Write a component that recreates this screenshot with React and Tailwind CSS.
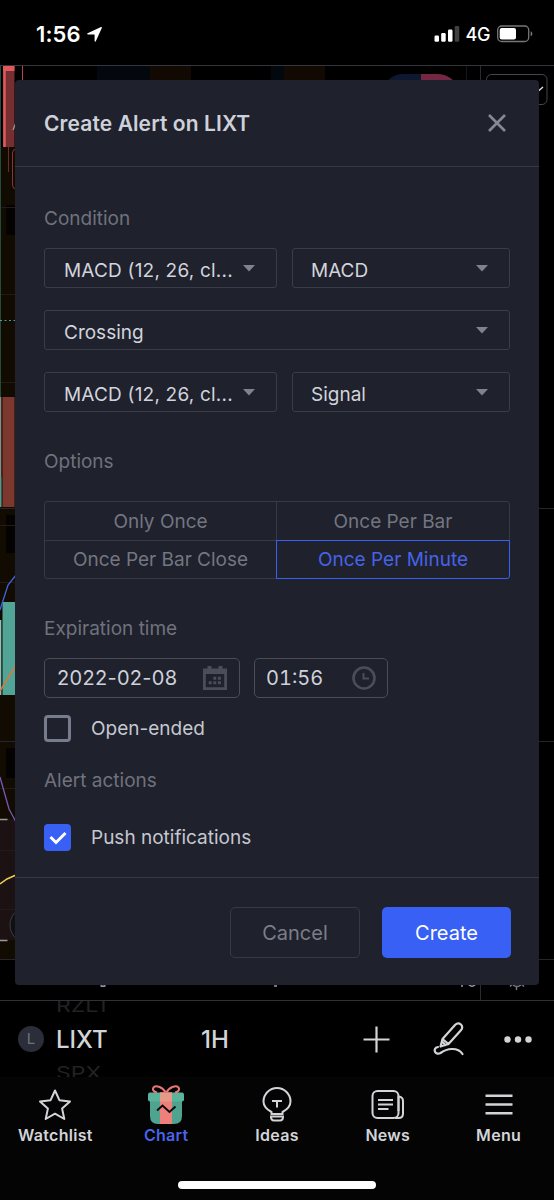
import { useState } from 'react';

const REPEAT_OPTIONS = ['Only Once', 'Once Per Bar', 'Once Per Bar Close', 'Once Per Minute'];

function StatusBar() {
  return (
    <header className="flex h-[65px] items-start justify-between pt-[22px] pr-[20px] pl-[36px] text-white">
      <div className="flex items-center">
        <span className="text-[22px] leading-[25px] font-semibold tracking-[0.1px]">1:56</span>
        <svg className="ml-[6px]" width="15" height="15" viewBox="0 0 15 15" fill="currentColor">
          <path d="M14 .1c.7-.3 1.100.2.8.9L8.800 14.300c-.3.7-1.200.6-1.200-.2V7.900c0-.3-.2-.5-.5-.5H.9C.1 7.400-.1 6.500.6 6.200Z" />
        </svg>
      </div>
      <div className="flex items-center">
        <svg width="26" height="25" viewBox="0 0 26 25" fill="currentColor">
          <rect x="0.500" y="13.500" width="4.500" height="6.300" rx="1.200" />
          <rect x="7.200" y="11" width="4.500" height="8.800" rx="1.200" />
          <rect x="14" y="7.500" width="4.500" height="12.300" rx="1.200" />
          <rect x="20.700" y="4" width="4.500" height="15.800" rx="1.200" opacity="0.250" />
        </svg>
        <span className="ml-[6px] text-[18px] leading-[25px] font-medium tracking-[-0.4px]">4G</span>
        <svg className="ml-[7px]" width="37" height="25" viewBox="0 0 37 25">
          <rect x="0.700" y="4" width="31" height="15.500" rx="4" fill="none" stroke="#777" strokeWidth="1.300" />
          <rect x="2.700" y="6" width="16.300" height="11.500" rx="2" fill="#fff" />
          <path d="M33.700 9.200c2.200.8 2.200 4.300 0 5.100z" fill="#777" />
        </svg>
      </div>
    </header>
  );
}

function ChartBackdrop() {
  return (
    <svg className="absolute inset-0" width="554" height="934" viewBox="0 66 554 934" fill="none">
      <rect x="0" y="147" width="40" height="812" fill="#110b02" />
      <rect x="6" y="205" width="20" height="30" fill="#050301" />
      <rect x="6" y="515" width="20" height="38" fill="#050301" />
      <rect x="6" y="748" width="20" height="30" fill="#050301" />
      <rect x="0" y="819" width="40" height="121" fill="#1c1213" />
      <path d="M0 207.500h40M0 294.500h40M0 382.500h40M0 525.500h40M0 582.500h40M0 788.500h40M0 850.500h40M0 909.500h40" stroke="#211c17" />
      <path d="M0 508.500h554M0 741.500h554M0 959.500h554" stroke="#25252b" />
      <path d="M0.500 66v331" stroke="#254a40" />

      <rect x="97" y="66" width="53" height="20" fill="#03080f" />
      <rect x="150" y="66" width="41" height="20" fill="#120a02" />
      <rect x="271" y="66" width="13" height="20" fill="#03080f" />
      <rect x="284" y="66" width="41" height="20" fill="#120a02" />
      <path d="M466.500 66v20" stroke="#15171c" />
      <path d="M480.500 66v935" stroke="#2a2b31" />
      <path d="M385 90c0-10 8-16 18-16h18v16z" fill="#0e1730" />
      <path d="M421 74h16c10 0 20 6 20 16h-36z" fill="#742743" />
      <rect x="486.500" y="74.500" width="60.500" height="30" rx="5" fill="#000" stroke="#44464d" />
      <path d="M535 86l4 4.500 4-3.500" stroke="#ddd" strokeWidth="1.500" />

      <rect x="3" y="66" width="11.500" height="81" fill="#752f30" />
      <path d="M4.500 66v81" stroke="#e0585a" strokeWidth="2.500" />
      <rect x="3" y="66" width="11.500" height="5" fill="#e0585a" />
      <path d="M22.500 66v20" stroke="#b9474c" />
      <path d="M8.500 147v25" stroke="#6b2a2b" />
      <path d="M13 130l4-10" stroke="#999" strokeWidth="1.300" />
      <rect x="12.500" y="149" width="20" height="40" rx="4" stroke="#8c3338" />

      <path d="M0 320.500h40" stroke="#4c9f96" strokeDasharray="2 2.500" />
      <rect x="0" y="397" width="1.300" height="110" fill="#8f8a86" />
      <rect x="2.500" y="397" width="12" height="110" fill="#7c382e" />
      <rect x="0" y="477" width="1.300" height="30" fill="#4f9d90" />
      <rect x="0" y="620" width="1.300" height="75" fill="#8bc4b8" />
      <rect x="2.500" y="602" width="20" height="93" fill="#51a496" />
      <path d="M0 610l8-25 8-10" stroke="#3f66e0" strokeWidth="1.300" />
      <path d="M0 691l16-26" stroke="#d5793d" strokeWidth="1.500" />
      <path d="M0 777l9 32 7 13" stroke="#7a58b8" strokeWidth="1.300" />
      <path d="M0 819.500h7.500M0 940.500h7.500" stroke="#9a9a9a" strokeWidth="1.300" />
      <path d="M0 884l7-5 9-4" stroke="#e6d44e" strokeWidth="1.500" />
      <circle cx="28" cy="925" r="18" fill="#101014" stroke="#3c3c40" />

      {/* what the dialog leaves of the time axis labels and the axis gear */}
      <path d="M100.500 985.500q2.500 1.500 5 0M274 986h3M461 986h2M469 985q3 2.500 6 0" stroke="#9a9ba0" strokeWidth="1.500" />
      <path d="M510 986.500l2-2M513 985q4 3 8 0M516.500 986v4M522 984.500l2 2" stroke="#77797f" strokeWidth="1.500" />
    </svg>
  );
}

function SelectBox({ value, className = 'pl-[19px]' }) {
  return (
    <button className={`flex h-10 items-center justify-between rounded-[3px] border-[1.500px] border-[#3a3d48] pr-[21px] text-[#d1d4dc] ${className}`}>
      <span className="pt-[6px] whitespace-nowrap">{value}</span>
      <svg width="12" height="7" viewBox="0 0 12 7" fill="#80838f">
        <path d="M0 0h12L6 6.500z" />
      </svg>
    </button>
  );
}

function Label({ children, className = '' }) {
  return <h3 className={`h-6 pt-px leading-6 text-[#6f727d] ${className}`}>{children}</h3>;
}

function CalendarIcon() {
  return (
    <svg width="24" height="24" viewBox="0 0 24 24" fill="#4b4e59">
      <path fillRule="evenodd" d="M0 2.500h4.500V0h4v2.500h7V0h4v2.500H24V24H0zM2.800 8v13.200h18.400V8z" />
      <path d="M10.300 10.700h3v3h-3zM14.900 10.700h3v3h-3zM5.700 15.200h3v3h-3zM10.300 15.200h3v3h-3zM14.900 15.200h3v3h-3z" />
    </svg>
  );
}

function ClockIcon() {
  return (
    <svg width="24" height="24" viewBox="0 0 24 24" fill="none" stroke="#4b4e59">
      <circle cx="12" cy="12" r="10.500" strokeWidth="2.600" />
      <path d="M11.500 7v5.500h5.500" strokeWidth="2" />
    </svg>
  );
}

function Checkbox({ checked, onChange, children, className = '' }) {
  return (
    <button className={`flex h-[27px] items-center ${className}`} onClick={onChange}>
      {checked ? (
        <span className="flex size-[27px] items-center justify-center rounded-[4px] bg-[#3860f4]">
          <svg width="18" height="14" viewBox="0 0 18 14" fill="none" stroke="#fff" strokeWidth="3">
            <path d="M1.500 6l5.500 5.500L16.500 2" />
          </svg>
        </span>
      ) : (
        <span className="size-[27px] rounded-[4px] border-3 border-[#747c8e]" />
      )}
      <span className="ml-5 pt-px text-[#c5c8d1]">{children}</span>
    </button>
  );
}

function AlertDialog() {
  const [repeat, setRepeat] = useState('Once Per Minute');
  const [openEnded, setOpenEnded] = useState(false);
  const [push, setPush] = useState(true);

  return (
    <section className="relative mx-[15px] mt-[14px] h-[905px] rounded-[4px] bg-[#1f212c] text-[19px]">
      <div className="flex h-[87px] items-center justify-between border-b border-[#363a45] pr-[33px] pl-[29px]">
        <h2 className="pt-px text-[21px] font-semibold tracking-[0.1px] text-[#ced1da]">Create Alert on LIXT</h2>
        <svg width="18" height="18" viewBox="0 0 18 18" stroke="#868993" strokeWidth="2.600">
          <path d="M1 1l16 16M17 1L1 17" />
        </svg>
      </div>

      <div className="h-[710px] px-[29px] pt-[39px]">
        <Label>Condition</Label>
        <div className="mt-[18px] flex flex-col gap-[22px]">
          <div className="flex gap-[15px]">
            <SelectBox value="MACD (12, 26, cl..." className="w-[233px] pl-[19px] tracking-[0.2px]" />
            <SelectBox value="MACD" className="flex-1 pl-[18px]" />
          </div>
          <SelectBox value="Crossing" />
          <div className="flex gap-[15px]">
            <SelectBox value="MACD (12, 26, cl..." className="w-[233px] pl-[19px] tracking-[0.2px]" />
            <SelectBox value="Signal" className="flex-1 pl-[18px]" />
          </div>
        </div>

        <Label className="mt-[37px]">Options</Label>
        <div className="mt-[28px] grid h-[78px] grid-cols-2">
          {REPEAT_OPTIONS.map((option) => (
            <button
              key={option}
              onClick={() => setRepeat(option)}
              className={`border pt-[2px] even:-ml-px nth-[n+3]:-mt-px first:rounded-tl-[3px] last:rounded-br-[3px] nth-2:rounded-tr-[3px] nth-3:rounded-bl-[3px] ${repeat === option ? 'z-10 border-[#3860f4] text-[#4663e8]' : 'border-[#363a45] text-[#737681]'}`}
            >
              {option}
            </button>
          ))}
        </div>

        <Label className="mt-[37px]">Expiration time</Label>
        <div className="mt-[18px] flex gap-[14px] text-[20px] text-[#ced1da]">
          <div className="flex h-10 w-[196px] items-center justify-between rounded-[5px] border-[1.500px] border-[#4a4d58] px-[12px]">
            <span className="tracking-[0.3px]">2022-02-08</span>
            <CalendarIcon />
          </div>
          <div className="flex h-10 w-[134px] items-center justify-between rounded-[5px] border-[1.500px] border-[#4a4d58] px-[11px]">
            <span className="tabular-nums">01:56</span>
            <ClockIcon />
          </div>
        </div>
        <Checkbox className="mt-[17px]" checked={openEnded} onChange={() => setOpenEnded(!openEnded)}>Open-ended</Checkbox>

        <Label className="mt-[26px]">Alert actions</Label>
        <Checkbox className="mt-[32px]" checked={push} onChange={() => setPush(!push)}>Push notifications</Checkbox>
      </div>

      <div className="flex h-[108px] justify-end gap-[22px] border-t border-[#363a45] pt-[29px] pr-[28px] text-[20px]">
        <button className="h-[51px] w-[130px] rounded-[5px] border-[1.500px] border-[#363a45] text-[#7b7e89]">Cancel</button>
        <button className="h-[51px] w-[129px] rounded-[5px] bg-[#3860f4] text-white">Create</button>
      </div>
    </section>
  );
}

function ChartToolbar() {
  return (
    <div className="flex h-[77px] items-center border-t border-[#303137] pl-[18px] text-[24px] font-medium text-[#d3d4d6]">
      <span className="flex size-[26px] items-center justify-center rounded-full bg-[#2b2d38] text-[15px] font-normal text-[#6f727d]">L</span>
      <div className="ml-[12px] flex h-[76px] w-[145px] flex-col justify-center overflow-hidden">
        <span className="origin-bottom scale-y-75 text-[23px] leading-[30px] font-normal text-[#222226]">RZLT</span>
        <span className="mt-[8px] mb-[7px] leading-[30px]">LIXT</span>
        <span className="origin-top scale-y-75 text-[23px] leading-[30px] font-normal text-[#222226]">SPX</span>
      </div>
      <span className="w-[162px] pt-[2px]">1H</span>
      <svg width="27" height="27" viewBox="0 0 27 27" stroke="currentColor" strokeWidth="2.200">
        <path d="M13.500 0.500v26M0.500 13.500h26" />
      </svg>
      <svg className="ml-[43px]" width="34" height="36" viewBox="0 0 34 36" fill="none" stroke="currentColor" strokeWidth="2.200" strokeLinejoin="round" strokeLinecap="round">
        <path d="M9.500 18L22 4c2-2 4.200-2 5.900-.5s1.800 3.800 0 5.800L15.500 23l-8 2.500zM9.500 18l6 5M9 20.500l3.500 3.500" />
        <path d="M5 26c-3.300.5-3.800 3-3 4.800s3.300 2.500 5.500 1.200c6-4.500 17-6.500 22 1" />
      </svg>
      <svg className="ml-[37px]" width="28" height="7" viewBox="0 0 28 7" fill="currentColor">
        <circle cx="3.500" cy="3.500" r="3.200" />
        <circle cx="14" cy="3.500" r="3.200" />
        <circle cx="24.500" cy="3.500" r="3.200" />
      </svg>
    </div>
  );
}

function StarIcon() {
  return (
    <svg width="36" height="40" viewBox="0 0 36 40" fill="none" stroke="currentColor" strokeWidth="2" strokeLinejoin="round">
      <path d="M18 5.500l4.400 9.700 10.600 1.200-7.900 7.200 2.200 10.400L18 28.700 8.700 34l2.200-10.400L3 16.400l10.600-1.200z" />
    </svg>
  );
}

function GiftIcon() {
  return (
    <svg width="36" height="40" viewBox="0 0 36 40" fill="none">
      <path d="M2 15h32v16q0 8-8 8H10q-8 0-8-8z" fill="#4fa38f" />
      <rect x="0" y="7.500" width="36" height="9" rx="2" fill="#5bb39c" />
      <rect x="12" y="7.500" width="12" height="31.500" fill="#ee7f7a" />
      <rect x="12" y="7.500" width="12" height="9" fill="#e39b88" />
      <path d="M17.500 7.500C15 2 8 .2 6 2S5 7 9 7.500M18.500 7.500C21 2 28 .2 30 2s1 5-3 5.500" stroke="#e87677" strokeWidth="2" />
      <path d="M9 25.500l5.500-5 7 6.500 6-5.500" stroke="#0b0d0d" strokeWidth="2" />
    </svg>
  );
}

function BulbIcon() {
  return (
    <svg width="36" height="40" viewBox="0 0 36 40" fill="none" stroke="currentColor" strokeWidth="2">
      <path d="M12.500 29v-2C7 24 4.500 20.500 4.500 16.500a13.500 13.500 0 0 1 27 0c0 4-2.500 7.500-8 10.500v2zM11 31.500h14M12 31.500q0 4 3 4h6q3 0 3-4M13 16h10M18 16v6.500" />
    </svg>
  );
}

function NewsIcon() {
  return (
    <svg width="36" height="40" viewBox="0 0 36 40" fill="none" stroke="currentColor" strokeWidth="2">
      <rect x="2.500" y="6" width="26" height="27" rx="5" />
      <path d="M25 33h3.500q4.500 0 4.500-4.500V16q0-4-4.500-4.500V26M8 15h15M8 19.500h15M8 24h10.500" />
    </svg>
  );
}

function MenuIcon() {
  return (
    <svg width="36" height="40" viewBox="0 0 36 40" stroke="currentColor" strokeWidth="2.600">
      <path d="M4.500 10.700h27M4.500 19.500h27M4.500 28.300h27" />
    </svg>
  );
}

const TABS = [
  { name: 'Watchlist', icon: StarIcon },
  { name: 'Chart', icon: GiftIcon, active: true },
  { name: 'Ideas', icon: BulbIcon },
  { name: 'News', icon: NewsIcon },
  { name: 'Menu', icon: MenuIcon },
];

export default function App() {
  return (
    <div className="flex h-[1200px] w-[554px] flex-col overflow-hidden bg-black font-['Inter',sans-serif]">
      <StatusBar />
      <main className="relative h-[935px] shrink-0 border-t border-[#34363d]">
        <ChartBackdrop />
        <AlertDialog />
      </main>
      <ChartToolbar />
      <nav className="flex flex-1 flex-col items-center bg-[#040405]">
        <div className="grid w-full grid-cols-5 pt-[8px]">
          {TABS.map(({ name, icon: Icon, active }) => (
            <a key={name} className={`flex flex-col items-center text-[16px] leading-5 font-semibold tracking-[0.3px] ${active ? 'text-[#4a63e8]' : 'text-[#d3d4d8]'}`}>
              <Icon />
              {name}
            </a>
          ))}
        </div>
        <div className="mt-[36px] h-[8px] w-[198px] rounded-full bg-white" />
      </nav>
    </div>
  );
}
